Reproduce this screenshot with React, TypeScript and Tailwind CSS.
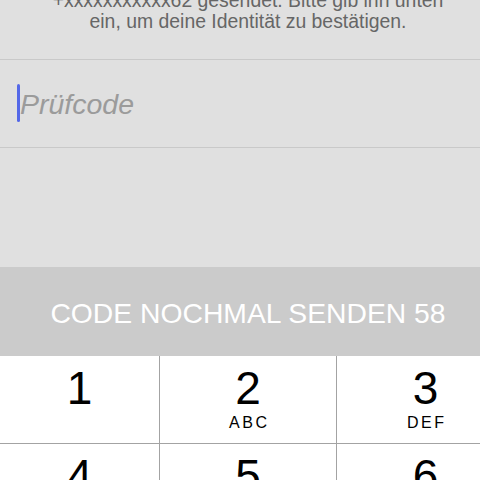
import React from 'react';

const keys = [
  { d: '1', l: '' },
  { d: '2', l: 'ABC' },
  { d: '3', l: 'DEF' },
  { d: '4', l: 'GHI' },
  { d: '5', l: 'JKL' },
  { d: '6', l: 'MNO' },
];

const App = () => {
  return (
    <div className="w-[480px] h-[480px] overflow-hidden bg-[#e0e0e0] font-['Liberation_Sans',Arial,sans-serif]">
      <div className="w-[496px]">
        {/* Hinweistext */}
        <div className="-mt-[10px] h-[69px] text-center text-[19.4px] leading-[21px] text-[#666666]">
          <p>+xxxxxxxxxxx62 gesendet. Bitte gib ihn unten</p>
          <p>ein, um deine Identität zu bestätigen.</p>
        </div>

        {/* Eingabe */}
        <div className="border-y border-[#c9c9c9] h-[89px] flex items-center pl-[17px]">
          <div className="w-[3px] h-[38px] -mt-[1px] rounded-full bg-[#5468e8]" />
          <span className="text-[28.5px] leading-none italic text-[#9b9b9b] mt-[1px]">Prüfcode</span>
        </div>

        <div className="h-[119px]" />

        {/* Button */}
        <div className="h-[89px] bg-[#cbcbcb] flex items-center justify-center">
          <span className="text-[28.3px] leading-none text-white pt-[3px]">CODE NOCHMAL SENDEN 58</span>
        </div>
      </div>

      {/* Ziffernblock */}
      <div className="grid grid-cols-[160px_177px_177px] bg-white">
        {keys.map((k, i) => (
          <div
            key={k.d}
            className={`h-[88px] flex flex-col items-center pt-[9px] border-b border-[#a3a3a3] ${i % 3 !== 2 ? 'border-r' : ''}`}
          >
            <span className="text-[46px] leading-none text-black">{k.d}</span>
            <span className="mt-[4px] text-[16px] leading-none tracking-[2.5px] pl-[2.5px] text-black">{k.l}</span>
          </div>
        ))}
      </div>
    </div>
  );
};

export default App;
